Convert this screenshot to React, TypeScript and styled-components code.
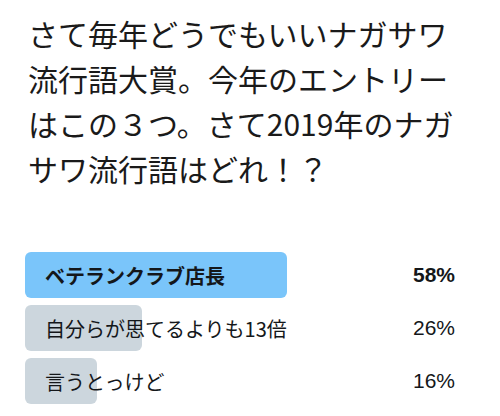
import styled, { createGlobalStyle } from 'styled-components';

const GlobalStyle = createGlobalStyle`
  html, body {
    margin: 0;
    padding: 0;
    background: #ffffff;
  }
  body {
    font-family: "Noto Sans CJK JP", "Noto Sans", sans-serif;
    color: #14171a;
  }
`;

const Page = styled.main`
  width: 500px;
  height: 416px;
  box-sizing: border-box;
  padding: 11px 24px 0 25px;
  overflow: hidden;
`;

const Tweet = styled.p`
  margin: 0 0 61px 3px;
  font-size: 30px;
  line-height: 45px;
  font-weight: 400;
  white-space: nowrap;
  color: #1a1a1a;
`;

const Poll = styled.section`
  display: flex;
  flex-direction: column;
  gap: 7px;
  width: 451px;
`;

const Row = styled.div`
  position: relative;
  height: 46px;
  display: flex;
  align-items: center;
  justify-content: space-between;
  padding: 0 21px 0 20px;
`;

const Fill = styled.div<{ $winner: boolean }>`
  position: absolute;
  left: 0;
  top: 0;
  bottom: 0;
  border-radius: 6px;
  background: ${(p) => (p.$winner ? '#7ac5fa' : '#ccd6dd')};
`;

const Label = styled.span<{ $winner: boolean }>`
  position: relative;
  font-size: 20px;
  font-weight: ${(p) => (p.$winner ? 700 : 400)};
  color: #14171a;
`;

const Percent = styled.span<{ $winner: boolean }>`
  position: relative;
  font-family: "Liberation Sans", Arial, sans-serif;
  font-size: 21px;
  font-weight: ${(p) => (p.$winner ? 700 : 400)};
  color: #14171a;
`;

const choices = [
  { label: 'ベテランクラブ店長', pct: 58 },
  { label: '自分らが思てるよりも13倍', pct: 26 },
  { label: '言うとっけど', pct: 16 },
];

export default function App() {
  const top = Math.max(...choices.map((c) => c.pct));
  return (
    <Page>
      <GlobalStyle />
      <Tweet>
        さて毎年どうでもいいナガサワ
        <br />
        流行語大賞。今年のエントリー
        <br />
        はこの３つ。さて2019年のナガ
        <br />
        サワ流行語はどれ！？
      </Tweet>
      <Poll>
        {choices.map((c) => {
          const winner = c.pct === top;
          return (
            <Row key={c.label}>
              <Fill $winner={winner} style={{ width: `${c.pct}%` }} />
              <Label $winner={winner}>{c.label}</Label>
              <Percent $winner={winner}>{c.pct}%</Percent>
            </Row>
          );
        })}
      </Poll>
    </Page>
  );
}
